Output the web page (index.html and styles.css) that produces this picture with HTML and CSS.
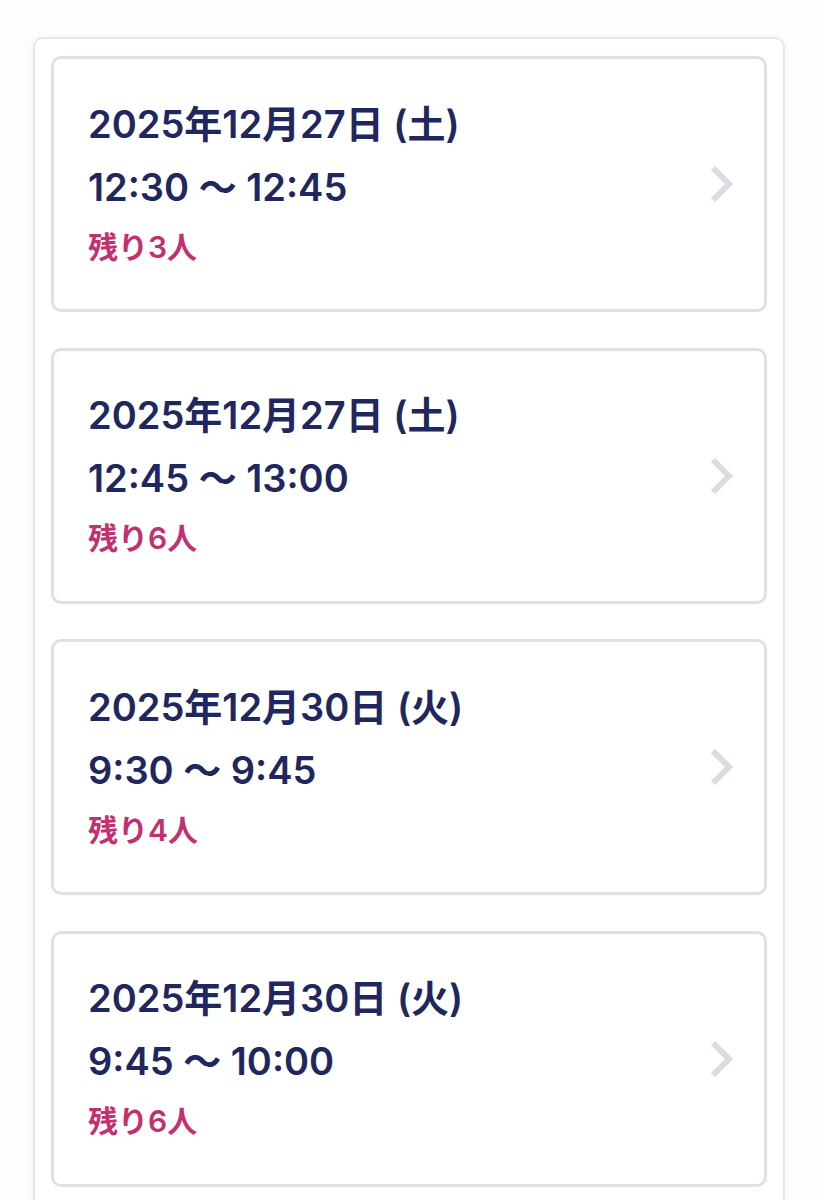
FILE: index.html
```html
<!DOCTYPE html>
<html lang="ja">
<head>
    <meta charset="utf-8">
    <meta name="viewport" content="width=device-width, initial-scale=1.0">
    <title>予約枠の選択</title>
    <link rel="stylesheet" href="styles.css">
</head>
<body>
    <main class="slot-panel">
        <a class="slot-card" href="#">
            <div class="slot-info">
                <p class="slot-date">2025年12月27日 (土)</p>
                <p class="slot-time">12:30 〜 12:45</p>
                <p class="slot-remain">残り3人</p>
            </div>
            <svg class="slot-arrow" viewBox="0 0 28 40" aria-hidden="true">
                <path d="M5 4 L21 20 L5 36" />
            </svg>
        </a>

        <a class="slot-card" href="#">
            <div class="slot-info">
                <p class="slot-date">2025年12月27日 (土)</p>
                <p class="slot-time">12:45 〜 13:00</p>
                <p class="slot-remain">残り6人</p>
            </div>
            <svg class="slot-arrow" viewBox="0 0 28 40" aria-hidden="true">
                <path d="M5 4 L21 20 L5 36" />
            </svg>
        </a>

        <a class="slot-card" href="#">
            <div class="slot-info">
                <p class="slot-date">2025年12月30日 (火)</p>
                <p class="slot-time">9:30 〜 9:45</p>
                <p class="slot-remain">残り4人</p>
            </div>
            <svg class="slot-arrow" viewBox="0 0 28 40" aria-hidden="true">
                <path d="M5 4 L21 20 L5 36" />
            </svg>
        </a>

        <a class="slot-card" href="#">
            <div class="slot-info">
                <p class="slot-date">2025年12月30日 (火)</p>
                <p class="slot-time">9:45 〜 10:00</p>
                <p class="slot-remain">残り6人</p>
            </div>
            <svg class="slot-arrow" viewBox="0 0 28 40" aria-hidden="true">
                <path d="M5 4 L21 20 L5 36" />
            </svg>
        </a>
    </main>
</body>
</html>
```

FILE: styles.css
```css
:root {
    --navy: #1f275e;
    --pink: #c3306f;
    --card-border: #dfe1e6;
    --panel-border: #e6e7eb;
}

* {
    margin: 0;
    padding: 0;
    box-sizing: border-box;
}

body {
    font-family: Inter, "Noto Sans CJK JP", sans-serif;
    background: #fdfdfe;
    color: var(--navy);
    padding: 37px 33px 0;
}

.slot-panel {
    background: #fff;
    border: 2px solid var(--panel-border);
    border-bottom: none;
    border-radius: 10px 10px 0 0;
    box-shadow: 0 0 10px rgba(0, 0, 0, 0.04);
    padding: 17px 16px 0;
    display: flex;
    flex-direction: column;
    gap: 35.5px;
    min-height: 1200px;
}

.slot-card {
    display: flex;
    align-items: center;
    justify-content: space-between;
    height: 256px;
    padding: 0 28px 0 34px;
    border: 3px solid var(--card-border);
    border-radius: 10px;
    background: #fff;
    text-decoration: none;
    color: inherit;
}

.slot-info {
    display: flex;
    flex-direction: column;
}

.slot-date,
.slot-time {
    font-size: 38px;
    font-weight: 600;
    line-height: 63px;
    color: var(--navy);
}

.slot-remain {
    font-size: 30px;
    font-weight: 600;
    line-height: 57px;
    color: var(--pink);
}

.slot-arrow {
    width: 28px;
    height: 40px;
    fill: none;
    stroke: #d9dce1;
    stroke-width: 6;
}
```
